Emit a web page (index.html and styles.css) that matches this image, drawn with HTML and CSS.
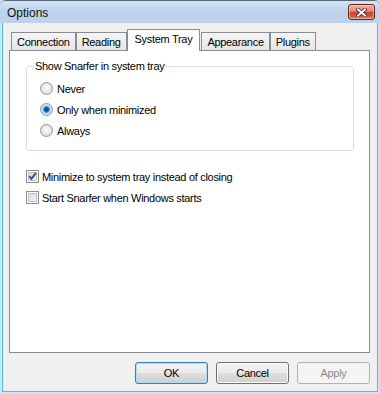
FILE: index.html
```html
<!DOCTYPE html>
<html lang="en">
<head>
  <meta charset="UTF-8">
  <title>Options</title>
  <link rel="stylesheet" href="styles.css">
</head>
<body>
<div class="window">
  <div class="titlebar">
    <span class="title">Options</span>
    <div class="close">
      <svg width="11" height="9" viewBox="0 0 11 9">
        <path d="M2 1.5 L9 7.5 M9 1.5 L2 7.5" stroke="#5a1a14" stroke-width="3.6" stroke-linecap="square"/>
        <path d="M2 1.5 L9 7.5 M9 1.5 L2 7.5" stroke="#ffffff" stroke-width="2" stroke-linecap="square"/>
      </svg>
    </div>
  </div>

  <div class="client">
    <div class="tabs">
      <div class="tab">Connection</div>
      <div class="tab">Reading</div>
      <div class="tab active">System Tray</div>
      <div class="tab">Appearance</div>
      <div class="tab">Plugins</div>
    </div>

    <div class="panel">
      <fieldset class="group">
        <legend>Show Snarfer in system tray</legend>
        <div class="choices">
          <label class="option"><span class="radio"></span>Never</label>
          <label class="option"><span class="radio checked"></span>Only when minimized</label>
          <label class="option"><span class="radio"></span>Always</label>
        </div>
      </fieldset>

      <div class="checks">
        <label class="option">
          <span class="checkbox">
            <svg width="11" height="11" viewBox="0 0 11 11">
              <path d="M2.2 5.2 L4.4 7.8 L9 1.8" fill="none" stroke="#3d5291" stroke-width="2"/>
            </svg>
          </span>Minimize to system tray instead of closing
        </label>
        <label class="option"><span class="checkbox"></span>Start Snarfer when Windows starts</label>
      </div>
    </div>

    <div class="buttons">
      <button class="btn ok">OK</button>
      <button class="btn">Cancel</button>
      <button class="btn" disabled>Apply</button>
    </div>
  </div>
</div>
</body>
</html>
```

FILE: styles.css
```css
html, body {
  margin: 0;
  height: 100%;
  background-color: #d3e3f3;
}

body {
  font-family: "Liberation Sans", Arial, sans-serif;
  font-size: 11px;
  letter-spacing: -0.3px;
  color: #000;
}

/* window frame */
.window {
  width: 380px;
  height: 394px;
  box-sizing: border-box;
  display: flex;
  flex-direction: column;
  border-top: 1px solid #55677b;
  border-radius: 6px 6px 0 0;
  background-color: #d3e3f3;
  overflow: hidden;
}

.titlebar {
  height: 22px;
  box-sizing: border-box;
  display: flex;
  justify-content: space-between;
  align-items: flex-start;
  padding: 3px 5px 0 7px;
  background: linear-gradient(#d6e5f5, #c0d5ec 40%, #bcd2ea);
}

.title {
  font-size: 12px;
  line-height: 18px;
  letter-spacing: 0;
  color: #111;
}

.close {
  width: 27px;
  height: 16px;
  box-sizing: border-box;
  border: 1px solid #6b241c;
  border-radius: 3px;
  display: flex;
  align-items: center;
  justify-content: center;
  background: linear-gradient(#eab0a3, #dc8f80 45%, #c5432f 50%, #cf5a43 80%, #e08c73);
  box-shadow: inset 0 0 0 1px rgba(255, 220, 210, 0.5);
}

/* dialog body */
.client {
  flex: 1;
  display: flex;
  flex-direction: column;
  margin: 0 2px 2px;
  border: 1px solid #41c3ee;
  border-top: none;
  padding: 6px 7px 7px 6px;
  background-color: #f0f0f0;
}

.tabs {
  height: 21px;
  display: flex;
  align-items: flex-end;
  padding-left: 2px;
}

.tab {
  height: 18px;
  box-sizing: border-box;
  padding: 0 5px;
  border: 1px solid #898c95;
  border-bottom: none;
  line-height: 18px;
  background: linear-gradient(#f5f5f5, #e6e6e6);
  white-space: nowrap;
}

.tab.active {
  position: relative;
  z-index: 1;
  height: 22px;
  margin: 0 1px -1px 0;
  padding: 0 7px;
  line-height: 19px;
  background: #fff;
}

.panel {
  flex: 1;
  border: 1px solid #898c95;
  background-color: #fff;
  padding: 9px 15px 0 16px;
}

.group {
  margin: 0;
  border: 1px solid #d5dfe5;
  border-radius: 3px;
  padding: 0 0 9px 7px;
}

.group legend {
  padding: 0 1px;
  line-height: 13px;
}

.choices {
  padding-top: 5px;
}

.option {
  height: 21px;
  display: flex;
  align-items: center;
  gap: 3px;
  white-space: nowrap;
}

.choices .option {
  padding-left: 6px;
  gap: 4px;
}

.radio {
  width: 13px;
  height: 13px;
  box-sizing: border-box;
  border-radius: 50%;
  border: 1px solid #949494;
  background: radial-gradient(circle at 50% 45%, #fdfdfd, #e2e2e2 65%, #cdcdcd);
}

.radio.checked {
  background: radial-gradient(circle at 50% 50%, #0f3c7d 0, #1f5fae 2px, #4d9ae0 3px, #9fd8f6 3.8px, #dcdcdc 4.4px, #f4f4f4 100%);
}

.checks {
  margin-top: 15px;
}

.checkbox {
  width: 13px;
  height: 13px;
  box-sizing: border-box;
  border: 1px solid #8e8f8f;
  display: flex;
  align-items: center;
  justify-content: center;
  background: linear-gradient(135deg, #d3d7dc, #f8f8f8);
  box-shadow: inset 0 0 0 1px #fff, inset 0 0 0 2px #c0c4c9;
}

/* bottom buttons */
.buttons {
  height: 22px;
  margin-top: 9px;
  display: flex;
  justify-content: flex-end;
  gap: 8px;
}

.btn {
  width: 73px;
  height: 22px;
  padding: 0;
  font-family: "Liberation Sans", Arial, sans-serif;
  font-size: 11px;
  letter-spacing: -0.3px;
  color: #000;
  border: 1px solid #707070;
  border-radius: 3px;
  background: linear-gradient(#f3f3f3, #ebebeb 48%, #dddddd 52%, #cfcfcf);
  box-shadow: inset 0 0 0 1px #fbfbfb;
}

.btn.ok {
  border-color: #3c7fb1;
  box-shadow: inset 0 0 0 1px #a6def6;
}

.btn:disabled {
  color: #8a8a8a;
  border-color: #adb2b5;
  background: #f4f4f4;
  box-shadow: none;
}
```
